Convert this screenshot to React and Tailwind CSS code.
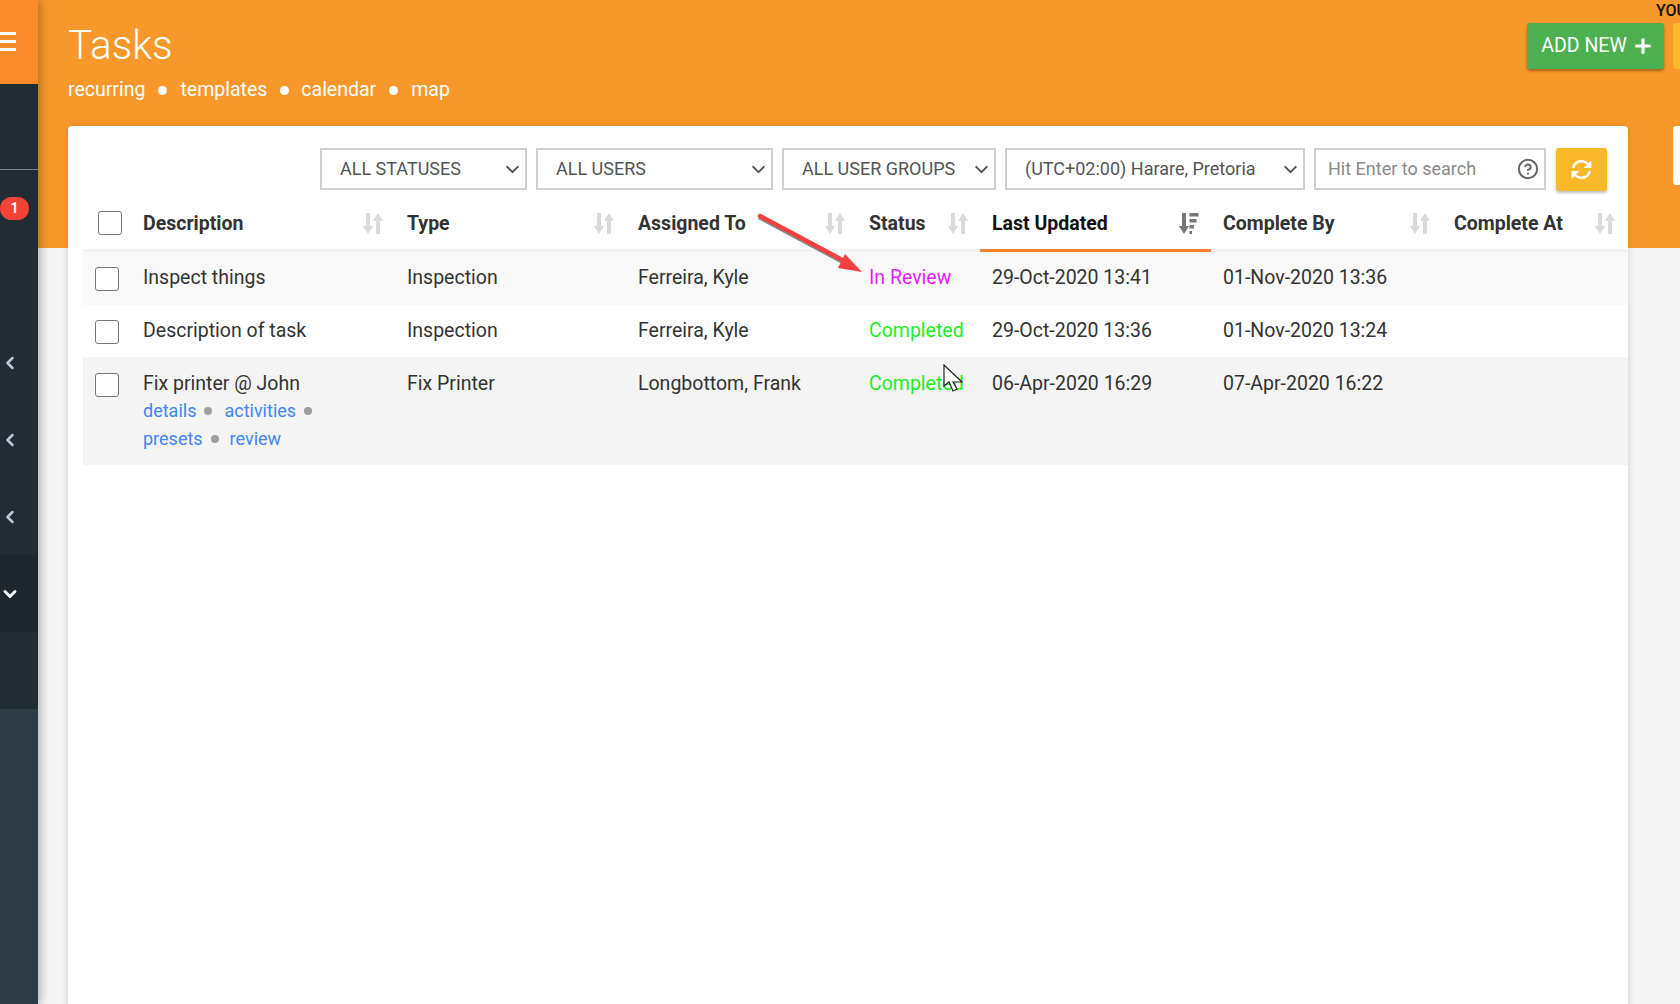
import React from "react";
import { ChevronDown, ChevronLeft, CircleHelp, Plus } from "lucide-react";

function SortIcon({ active }) {
  return (
    <svg width="20" height="21" viewBox="0 0 20 21" className="shrink-0">
      <path d="M3 0h4v13h3l-5 8-5-8h3z" fill={active ? "#777" : "#dadada"} />
      {active ? (
        <path d="M10.5 0h9v3.5h-9zM10.5 6h7v3.5h-7zM10.5 12h4.5v3.5h-4.5zM10.5 18h2.5v3h-2.5z" fill="#777" />
      ) : (
        <path d="M13 21h4V8h3l-5-8-5 8h3z" fill="#dadada" />
      )}
    </svg>
  );
}

function RefreshIcon() {
  return (
    <svg width="25" height="25" viewBox="0 0 24 24" fill="none">
      <path d="M4 10.5A8.3 8.3 0 0 1 18 6.5" stroke="#fff" strokeWidth="2.4" />
      <path d="M20 13.5A8.3 8.3 0 0 1 6 17.5" stroke="#fff" strokeWidth="2.4" />
      <path d="M21.5 3v7.5H14z" fill="#fff" />
      <path d="M2.5 21v-7.5H10z" fill="#fff" />
    </svg>
  );
}

function Checkbox() {
  return <div className="w-[24px] h-[24px] rounded-[3px] border border-[#767676] bg-white" />;
}

function FilterSelect({ label, className }) {
  return (
    <div className={`h-[42px] border-2 border-[#cfcfcf] bg-white flex items-center justify-between pl-[18px] pr-[2px] text-[18px] text-[#555] ${className}`}>
      <span className="whitespace-nowrap -mt-[1px]">{label}</span>
      <ChevronDown size={21} color="#555" strokeWidth={2.4} />
    </div>
  );
}

const columns = "grid grid-cols-[48px_264px_231px_231px_123px_231px_231px_185px]";

function Header({ label, active }) {
  return (
    <div className={`flex items-center justify-between px-[12px] pb-[2px] h-[52px] font-bold text-[19.5px] whitespace-nowrap border-b-[3px] ${active ? "text-[#111] border-[#f58233]" : "text-[#333] border-[#f2f2f2]"}`}>
      <span>{label}</span>
      <SortIcon active={active} />
    </div>
  );
}

function Dot() {
  return <span className="w-[8px] h-[8px] rounded-full bg-[#9e9e9e] mx-[8px]" />;
}

function Row({ bg, h, cbPt, textPt, desc, type, user, status, statusColor, updated, by, links }) {
  const cell = `px-[12px] leading-[28px] whitespace-nowrap ${textPt}`;
  return (
    <div className={`${columns} ${bg} ${h} text-[19.5px] text-[#333]`}>
      <div className={`pl-[12px] ${cbPt}`}>
        <Checkbox />
      </div>
      <div className={cell}>
        <div>{desc}</div>
        {links && (
          <div className="-mt-[1px] text-[18px] text-[#4285f4] leading-[28px]">
            <div className="flex items-center">
              <span>details</span>
              <Dot />
              <span className="ml-[4px]">activities</span>
              <Dot />
            </div>
            <div className="flex items-center">
              <span>presets</span>
              <Dot />
              <span className="ml-[3px]">review</span>
            </div>
          </div>
        )}
      </div>
      <div className={cell}>{type}</div>
      <div className={cell}>{user}</div>
      <div className={`${cell} ${statusColor}`}>{status}</div>
      <div className={cell}>{updated}</div>
      <div className={cell}>{by}</div>
      <div />
    </div>
  );
}

export default function App() {
  return (
    <div className="relative h-[1004px] w-[1680px] overflow-hidden flex bg-[#f3f3f3] font-['Roboto',sans-serif]">
      <aside className="w-[38px] shrink-0 h-full bg-[#222c33] flex flex-col shadow-[3px_0_8px_rgba(0,0,0,0.25)] z-10 overflow-hidden">
        <div className="h-[84px] bg-[#fb8a2b] flex items-center">
          <div className="w-[16px] -mt-[1px] flex flex-col gap-[5px]">
            <div className="h-[3px] bg-white" />
            <div className="h-[3px] bg-white" />
            <div className="h-[3px] bg-white" />
          </div>
        </div>
        <div className="h-[86px] border-b border-[#7c8387]" />
        <div className="h-[77px] pt-[27px]">
          <div className="w-[29px] h-[23px] rounded-full bg-[#f44336] text-white text-[14px] font-bold flex items-center justify-center">1</div>
        </div>
        <div className="h-[77px]" />
        {[0, 1, 2].map((i) => (
          <div key={i} className="h-[77px] flex items-center">
            <ChevronLeft size={20} color="#b9c6d6" strokeWidth={3} />
          </div>
        ))}
        <div className="h-[77px] bg-[#1e272d] flex items-center">
          <ChevronDown size={20} color="#fff" strokeWidth={3.5} />
        </div>
        <div className="h-[77px]" />
        <div className="flex-1 bg-[#2d3b44]" />
      </aside>

      <main className="flex-1 min-w-0">
        <header className="h-[248px] bg-[#f8982b] pl-[30px] pr-[16px] relative">
          <div className="flex items-start justify-between">
            <div>
              <h1 className="text-[40.5px] font-light text-white leading-[48px] pt-[21px]">Tasks</h1>
              <nav className="flex items-center text-[19.5px] text-white mt-[7px] leading-[28px]">
                <span>recurring</span>
                <span className="w-[9px] h-[9px] rounded-full bg-white mx-[13px]" />
                <span>templates</span>
                <span className="w-[9px] h-[9px] rounded-full bg-white mx-[12.5px]" />
                <span>calendar</span>
                <span className="w-[9px] h-[9px] rounded-full bg-white mx-[13px]" />
                <span>map</span>
              </nav>
            </div>
            <div className="flex gap-[9px] pt-[23px] shrink-0 -mr-[69px]">
              <button className="h-[46px] w-[137px] pl-[4px] bg-[#4caf50] rounded-[3px] text-white text-[19.5px] flex items-center justify-center gap-[5px] shadow-[0_2px_3px_rgba(0,0,0,0.35)]">
                ADD NEW <Plus size={22} strokeWidth={3.5} />
              </button>
              <div className="h-[46px] w-[60px] bg-[#fbb829] rounded-[3px]" />
            </div>
          </div>
        </header>

        <div className="-mt-[122px] flex gap-[45px] pl-[30px] relative">
          <section className="w-[1560px] shrink-0 bg-white rounded-t-[4px] h-[900px] shadow-[0_0_6px_rgba(0,0,0,0.15)]">
            <div className="flex justify-end gap-[9px] pt-[22px] pr-[21px] h-[74px]">
              <FilterSelect label="ALL STATUSES" className="w-[207px]" />
              <FilterSelect label="ALL USERS" className="w-[237px]" />
              <FilterSelect label="ALL USER GROUPS" className="w-[214px]" />
              <FilterSelect label="(UTC+02:00) Harare, Pretoria" className="w-[300px]" />
              <div className="h-[42px] w-[232px] border-2 border-[#cfcfcf] flex items-center justify-between pl-[12px] pr-[5px] text-[18px] text-[#8a8a8a]">
                <span className="-mt-[1px]">Hit Enter to search</span>
                <CircleHelp size={22} color="#666" strokeWidth={2.2} />
              </div>
              <button className="ml-[1px] h-[43px] w-[51px] bg-[#fbb829] rounded-[3px] flex items-center justify-center shadow-[0_2px_3px_rgba(0,0,0,0.25)]">
                <RefreshIcon />
              </button>
            </div>
            <div className="ml-[15px]">
              <div className={`${columns} h-[52px]`}>
                <div className="pl-[15px] pt-[11px] h-[52px] border-b-[3px] border-[#f2f2f2]">
                  <Checkbox />
                </div>
                <Header label="Description" />
                <Header label="Type" />
                <Header label="Assigned To" />
                <Header label="Status" />
                <Header label="Last Updated" active />
                <Header label="Complete By" />
                <Header label="Complete At" />
              </div>
              <Row bg="bg-[#f9f9f9]" h="h-[53px]" cbPt="pt-[15px]" textPt="pt-[12px]" desc="Inspect things" type="Inspection" user="Ferreira, Kyle" status="In Review" statusColor="text-[#e81cff]" updated="29-Oct-2020 13:41" by="01-Nov-2020 13:36" />
              <Row bg="bg-white" h="h-[52px]" cbPt="pt-[15px]" textPt="pt-[12px]" desc="Description of task" type="Inspection" user="Ferreira, Kyle" status="Completed" statusColor="text-[#1bf01b]" updated="29-Oct-2020 13:36" by="01-Nov-2020 13:24" />
              <Row bg="bg-[#f4f4f4]" h="h-[108px]" cbPt="pt-[16px]" textPt="pt-[13px]" desc="Fix printer @ John" type="Fix Printer" user="Longbottom, Frank" status="Completed" statusColor="text-[#1bf01b]" updated="06-Apr-2020 16:29" by="07-Apr-2020 16:22" links />
            </div>
          </section>
          <div className="w-[60px] h-[59px] bg-white rounded-[3px] shrink-0" />
        </div>
      </main>

      <span className="absolute -top-[1px] left-[1656px] text-[16px] font-medium text-[#111] whitespace-nowrap">YOU</span>

      <svg className="absolute left-[750px] top-[205px]" width="125" height="75" viewBox="0 0 125 75">
        <path d="M9 12L97 59" stroke="#8a8a8a" strokeWidth="4.5" />
        <path d="M10 11L98 58" stroke="#f44040" strokeWidth="4.5" strokeLinecap="round" />
        <path d="M112 67L88 63L95 49z" fill="#f44040" />
      </svg>

      <svg className="absolute left-[943px] top-[364px]" width="20" height="30" viewBox="0 0 20 30">
        <path d="M1 1v21l5-4 4 9 4-2-4-7h9z" fill="#fff" stroke="#222" strokeWidth="1.2" />
      </svg>
    </div>
  );
}
